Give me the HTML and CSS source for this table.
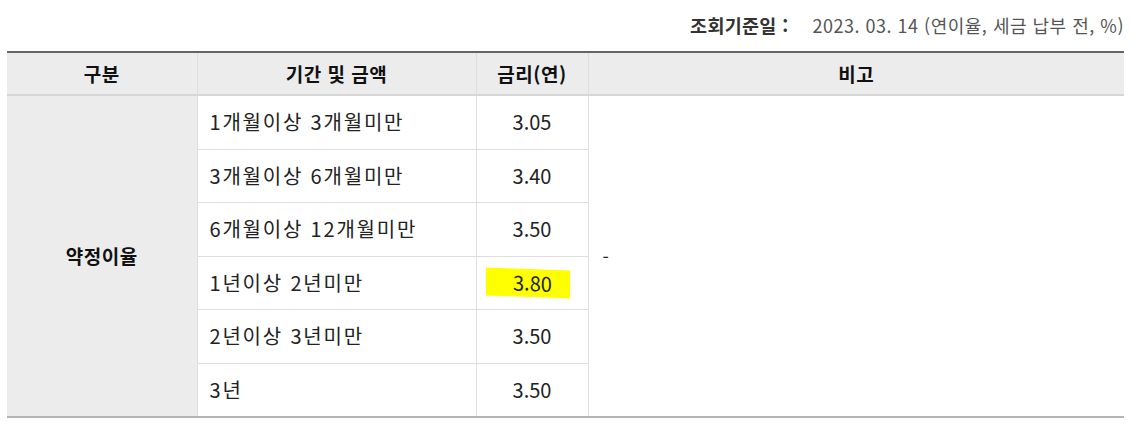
FILE: index.html
```html
<!DOCTYPE html>
<html lang="ko">
<head>
<meta charset="utf-8">
<link rel="stylesheet" href="styles.css">
</head>
<body>
<div class="wrap">
  <p class="caption"><strong>조회기준일 :</strong><span class="date">2023. 03. 14 (연이율, 세금 납부 전, %)</span></p>
  <table class="rates">
    <colgroup>
      <col class="c1"><col class="c2"><col class="c3"><col class="c4">
    </colgroup>
    <thead>
      <tr><th>구분</th><th>기간 및 금액</th><th>금리(연)</th><th>비고</th></tr>
    </thead>
    <tbody>
      <tr>
        <th class="group" rowspan="6">약정이율</th>
        <td class="term">1개월이상 3개월미만</td>
        <td class="rate">3.05</td>
        <td class="note" rowspan="6">-</td>
      </tr>
      <tr><td class="term">3개월이상 6개월미만</td><td class="rate">3.40</td></tr>
      <tr><td class="term">6개월이상 12개월미만</td><td class="rate">3.50</td></tr>
      <tr><td class="term">1년이상 2년미만</td><td class="rate"><span class="mark">3.80</span></td></tr>
      <tr><td class="term">2년이상 3년미만</td><td class="rate">3.50</td></tr>
      <tr><td class="term">3년</td><td class="rate">3.50</td></tr>
    </tbody>
  </table>
</div>
</body>
</html>
```
FILE: styles.css
```css
html, body {
  margin: 0;
  padding: 0;
  background: #fff;
}
body {
  font-family: "Noto Sans CJK KR", "Noto Sans", sans-serif;
  color: #222;
  font-size: 18px;
}
.wrap {
  width: 1117px;
  padding-left: 7px;
}
.caption {
  margin: 0;
  height: 51px;
  box-sizing: border-box;
  padding-top: 12px;
  text-align: right;
  font-size: 18px;
  line-height: 26px;
  color: #555;
}
.caption strong {
  color: #333;
  font-weight: 700;
  font-size: 18.5px;
  letter-spacing: 0.3px;
  margin-right: 24px;
}
.caption .date {
  letter-spacing: 0.5px;
}
.rates {
  width: 1117px;
  border-collapse: collapse;
  table-layout: fixed;
  border-top: 2px solid #666;
  border-bottom: 2px solid #b4b4b4;
}
.c1 { width: 190px; }
.c2 { width: 279px; }
.c3 { width: 112px; }
.c4 { width: 536px; }
.rates th, .rates td {
  border: 1px solid #dedede;
  padding: 0;
  line-height: 26px;
}
.rates tr > :first-child { border-left: none; }
.rates tr > :last-child { border-right: none; }
.rates thead th {
  background: #ececec;
  height: 41px;
  font-size: 19px;
  letter-spacing: 0.5px;
  font-weight: 700;
  color: #111;
  border-top: none;
  border-bottom: 2px solid #d6d6d6;
}
.rates tbody th.group {
  background: #ececec;
  font-size: 19px;
  letter-spacing: 0.5px;
  font-weight: 700;
  color: #111;
  border-left: none;
}
.rates td {
  height: 52.5px;
}
.term {
  padding-left: 12px !important;
  font-size: 20px;
  letter-spacing: 1.8px;
}
.rate {
  text-align: center;
  font-size: 20px;
}
.note {
  padding-left: 14px !important;
  vertical-align: middle;
}
.mark {
  display: inline-block;
  background: #ffff00;
  padding: 1px 18px 1px 27px;
  transform: skewY(2deg);
  margin-right: 9px;
}
```
